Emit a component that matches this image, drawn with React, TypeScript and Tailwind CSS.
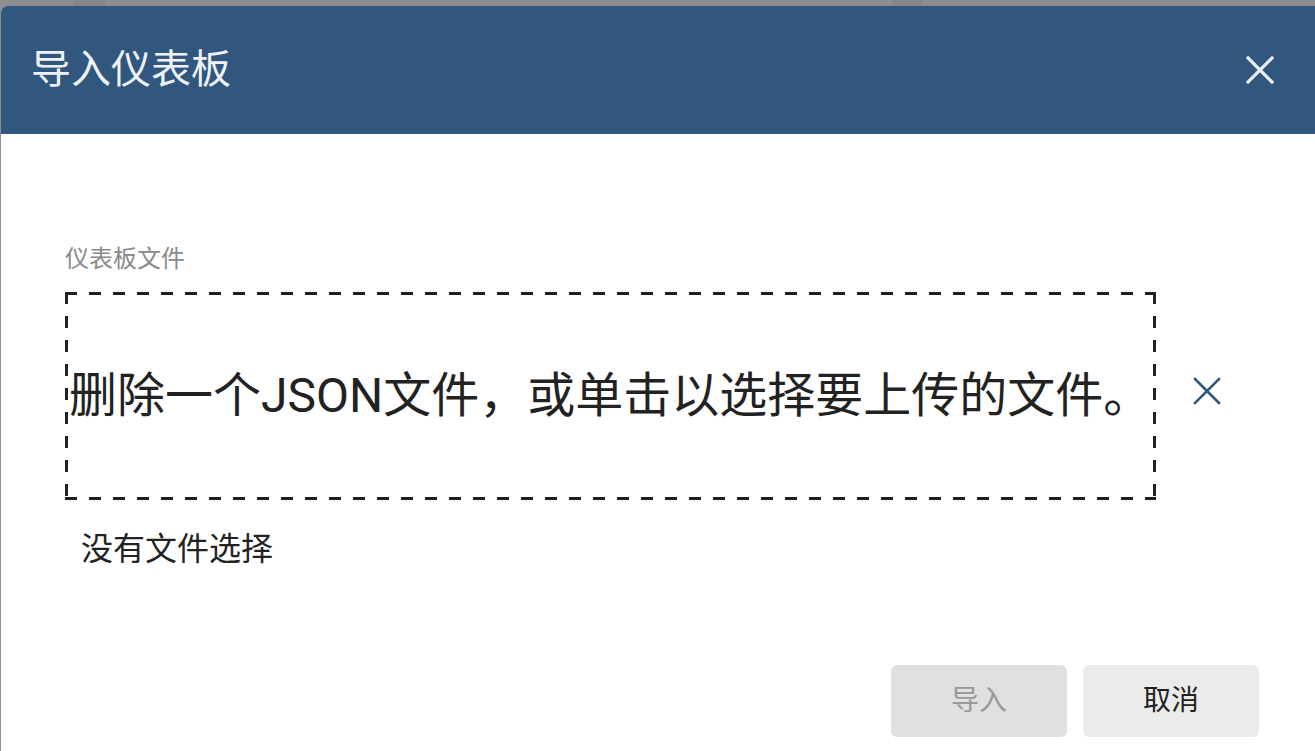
import React from "react";

const font = { fontFamily: "Roboto, 'Noto Sans CJK SC', sans-serif" };

function XIcon({ className }: { className?: string }) {
  return (
    <svg viewBox="0 0 28 28" className={className} fill="none" stroke="currentColor" strokeLinecap="square">
      <path d="M2 2 L26 26 M26 2 L2 26" />
    </svg>
  );
}

export default function App() {
  return (
    <div className="w-[1315px] h-[751px] overflow-hidden bg-[#8e8e8e] flex flex-col" style={font}>
      <div className="h-[6px] shrink-0 flex">
        <div className="w-[73px]" />
        <div className="w-[32px] bg-[#878787]" />
        <div className="w-[787px]" />
        <div className="w-[31px] bg-[#878787]" />
      </div>
      <div className="ml-px flex-1 bg-white rounded-tl-[6px] overflow-hidden flex flex-col">
        <div className="h-[128px] shrink-0 bg-[#31577f] flex items-center justify-between pl-[30px] pr-[41px]">
          <h1 className="text-[40px] leading-none text-[#eef2f7] font-normal">导入仪表板</h1>
          <XIcon className="w-[28px] h-[28px] text-[#e8edf4] [stroke-width:3.2]" />
        </div>
        <div className="flex flex-col pl-[64px] pt-[107px]">
          <label className="text-[24px] leading-[36px] text-[#8a8a8a]">仪表板文件</label>
          <div className="flex items-center mt-[15px]">
            <div className="w-[1091px] h-[208px] p-[3px] [background:linear-gradient(to_right,#222_50%,transparent_0)_top_left/24px_3px_repeat-x,linear-gradient(to_right,#222_50%,transparent_0)_bottom_left/24px_3px_repeat-x,linear-gradient(to_bottom,#222_50%,transparent_0)_top_left/3px_24px_repeat-y,linear-gradient(to_bottom,#222_50%,transparent_0)_top_right/3px_24px_repeat-y] flex items-center pl-[4px] overflow-hidden">
              <span className="text-[48px] leading-none text-[#222222] whitespace-nowrap">删除一个JSON文件，或单击以选择要上传的文件。</span>
            </div>
            <XIcon className="ml-[37px] mb-[10px] w-[28px] h-[28px] text-[#31577f] [stroke-width:2.6]" />
          </div>
          <div className="ml-[16px] mt-[29px] text-[32px] leading-[40px] text-[#222222]">没有文件选择</div>
        </div>
        <div className="flex justify-end gap-[16px] pr-[56px] mt-[96px]">
          <button className="w-[176px] h-[72px] rounded-[6px] bg-[#e0e0e0] text-[28px] text-[#999999]">导入</button>
          <button className="w-[176px] h-[72px] rounded-[6px] bg-[#ebebeb] text-[28px] text-[#222222]">取消</button>
        </div>
      </div>
    </div>
  );
}
